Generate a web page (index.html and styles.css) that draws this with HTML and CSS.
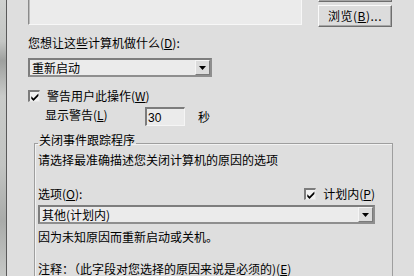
FILE: index.html
```html
<!DOCTYPE html>
<html lang="zh-CN">
<head>
    <meta charset="UTF-8">
    <meta name="viewport" content="width=device-width, initial-scale=1.0">
    <title>远程关机</title>
    <link rel="stylesheet" href="styles.css">
</head>
<body>
    <!-- Window edge -->
    <div class="edge"></div>

    <div class="dialog">
        <!-- Computer list -->
        <div class="top-row">
            <div class="list-box"></div>
            <div class="side-buttons">
                <button class="btn" type="button" aria-label="添加"></button>
                <button class="btn" type="button">浏览(<u>B</u>)...</button>
            </div>
        </div>

        <div class="label action-label">您想让这些计算机做什么(<u>D</u>):</div>
        <div class="combo combo-action">
            <span class="combo-text">重新启动</span>
            <span class="combo-arrow"><svg width="7" height="4" viewBox="0 0 7 4"><path d="M0 0h7L3.5 4z" fill="#000"/></svg></span>
        </div>

        <label class="check-row warn-row">
            <span class="check">
                <svg width="8" height="8" viewBox="0 0 8 8"><path d="M0.3 3.3l2.2 2.2L7.4 0.6v2.4L2.5 7.9 0.3 5.7z" fill="#000"/></svg>
            </span>
            <span>警告用户此操作(<u>W</u>)</span>
        </label>

        <div class="delay-row">
            <span class="delay-label">显示警告(<u>L</u>)</span>
            <input class="num" type="text" value="30">
            <span class="delay-unit">秒</span>
        </div>

        <!-- Shutdown event tracker -->
        <fieldset class="tracker">
            <legend>关闭事件跟踪程序</legend>
            <div class="label">请选择最准确描述您关闭计算机的原因的选项</div>

            <div class="option-row">
                <span>选项(<u>O</u>):</span>
                <label class="check-row">
                    <span class="check">
                        <svg width="8" height="8" viewBox="0 0 8 8"><path d="M0.3 3.3l2.2 2.2L7.4 0.6v2.4L2.5 7.9 0.3 5.7z" fill="#000"/></svg>
                    </span>
                    <span>计划内(<u>P</u>)</span>
                </label>
            </div>
            <div class="combo combo-reason">
                <span class="combo-text">其他(计划内)</span>
                <span class="combo-arrow"><svg width="7" height="4" viewBox="0 0 7 4"><path d="M0 0h7L3.5 4z" fill="#000"/></svg></span>
            </div>

            <div class="label reason-desc">因为未知原因而重新启动或关机。</div>
            <div class="label comment-label">注释：（此字段对您选择的原因来说是必须的)(<u>E</u>)</div>
        </fieldset>
    </div>
</body>
</html>
```

FILE: styles.css
```css
body {
    margin: 0;
    padding: 0;
    display: flex;
    height: 276px;
    overflow: hidden;
    background-color: #dedede;
    font-family: "Noto Sans CJK SC", "Liberation Sans", sans-serif;
    font-size: 12px;
    line-height: 14px;
    color: #000;
}

u {
    text-decoration: underline;
}

/* Window edge */
.edge {
    width: 6px;
    flex-shrink: 0;
    border-right: 1px solid #5a5a5a;
    background: linear-gradient(to bottom, #cfd1cf 0%, #c4c6c4 15%, #9ea09e 22%, #c9cbc9 35%, #c2c4c2 60%, #a9aba9 80%, #c6c8c6 100%);
}

.dialog {
    flex: 1;
    padding: 0 21px;
}

/* Computer list */
.top-row {
    display: flex;
    align-items: flex-start;
    margin-top: -35px;
}

.list-box {
    width: 274px;
    height: 60px;
    box-sizing: border-box;
    background-color: #ebebeb;
    border-top: 1px solid #8a8a8a;
    border-left: 1px solid #8a8a8a;
    border-right: 1px solid #f7f7f7;
    border-bottom: 1px solid #f7f7f7;
    box-shadow: inset 1px 1px 0 #bcbcbc;
}

.side-buttons {
    display: flex;
    flex-direction: column;
    gap: 3px;
    margin-left: 16px;
    margin-top: 15px;
}

.btn {
    width: 74px;
    height: 22px;
    padding: 0;
    box-sizing: border-box;
    font-family: inherit;
    font-size: 12px;
    line-height: 14px;
    color: #000;
    background-color: #dcdcdc;
    border-top: 1px solid #fafafa;
    border-left: 1px solid #fafafa;
    border-right: 1px solid #6e6e6e;
    border-bottom: 1px solid #6e6e6e;
    box-shadow: inset -1px -1px 0 #a6a6a6;
    letter-spacing: 0.5px;
}

.label {
    white-space: nowrap;
}

.action-label {
    margin-top: 9px;
}

/* Drop-down boxes */
.combo {
    display: flex;
    align-items: center;
    justify-content: space-between;
    height: 19px;
    box-sizing: border-box;
    background-color: #ebebeb;
    border: 2px solid #7d7d7d;
    border-right-color: #8e8e8e;
    border-bottom-color: #8e8e8e;
}

.combo-action {
    width: 184px;
    margin-top: 8px;
}

.combo-reason {
    margin-top: 4px;
}

.combo-text {
    padding-left: 2px;
}

.combo-arrow {
    display: flex;
    align-items: center;
    justify-content: center;
    width: 15px;
    height: 15px;
    box-sizing: border-box;
    background-color: #dcdcdc;
    border-top: 1px solid #f5f5f5;
    border-left: 1px solid #f5f5f5;
    border-right: 1px solid #7a7a7a;
    border-bottom: 1px solid #7a7a7a;
}

/* Check boxes */
.check-row {
    display: flex;
    align-items: center;
    gap: 7px;
    white-space: nowrap;
}

.warn-row {
    margin-top: 12px;
}

.check {
    display: flex;
    align-items: center;
    justify-content: center;
    width: 12px;
    height: 12px;
    box-sizing: border-box;
    background-color: #f2f2f2;
    border-top: 2px solid #7c7c7c;
    border-left: 2px solid #7c7c7c;
    border-right: 1px solid #e6e6e6;
    border-bottom: 1px solid #e6e6e6;
}

/* Warning delay */
.delay-row {
    display: flex;
    align-items: flex-start;
    margin-top: 4px;
    padding-left: 17px;
}

.delay-label {
    width: 100px;
    margin-top: 1px;
}

.num {
    width: 40px;
    height: 19px;
    box-sizing: border-box;
    margin: 0;
    padding: 1px 1px 0;
    font-family: "Liberation Sans", sans-serif;
    font-size: 12px;
    color: #000;
    background-color: #ebebeb;
    border-top: 2px solid #7c7c7c;
    border-left: 2px solid #7c7c7c;
    border-right: 1px solid #f5f5f5;
    border-bottom: 1px solid #f5f5f5;
    outline: none;
}

.delay-unit {
    margin-left: 13px;
    margin-top: 3px;
}

/* Shutdown event tracker */
.tracker {
    margin: 7px 0 0 6px;
    padding: 0 17px 0 3px;
    border: 1px solid #9e9e9e;
    box-shadow: inset 1px 1px 0 #f2f2f2;
    min-width: 0;
}

.tracker legend {
    padding: 0 1px 6px;
    line-height: 14px;
}

.option-row {
    display: flex;
    justify-content: space-between;
    align-items: center;
    margin-top: 20px;
}

.reason-desc {
    margin-top: 6px;
}

.comment-label {
    margin-top: 18px;
}
```
